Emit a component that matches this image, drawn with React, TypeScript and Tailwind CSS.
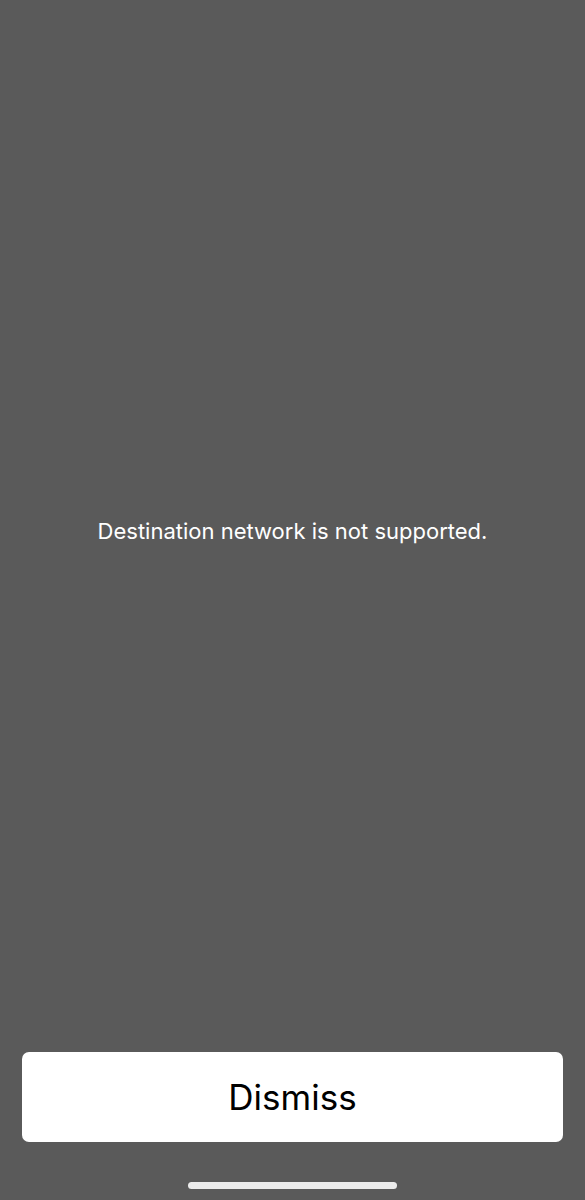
export default function App() {
  return (
    <div className="flex h-[1200px] w-full flex-col bg-[#5a5a5a]" style={{ fontFamily: 'Inter, "Noto Sans", sans-serif' }}>
      <div className="flex flex-1 items-center justify-center pt-[10px]">
        <p className="text-[22px] leading-none text-white">Destination network is not supported.</p>
      </div>
      <div className="px-[22px]">
        <button className="flex h-[90px] w-full items-center justify-center rounded-[7px] bg-white text-[35px] text-black">
          Dismiss
        </button>
      </div>
      <div className="flex h-[58px] items-start justify-center pt-[40px]">
        <div className="h-[7px] w-[209px] rounded-full bg-[#ececec]" />
      </div>
    </div>
  );
}
